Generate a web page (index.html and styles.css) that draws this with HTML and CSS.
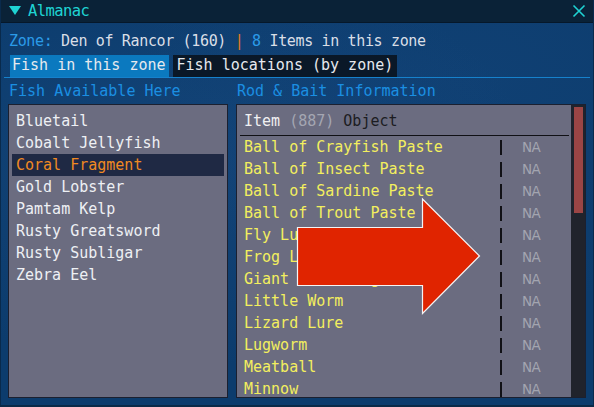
FILE: index.html
```html
<!DOCTYPE html>
<html>
<head>
<meta charset="utf-8">
<link rel="stylesheet" href="styles.css">
</head>
<body>
<div class="window">
  <div class="titlebar">
    <svg class="tri" width="14" height="12" viewBox="0 0 14 12"><polygon points="1,1 13,1 7,10" fill="#1fd3d3"/></svg>
    <span class="title">Almanac</span>
    <svg class="close" width="14" height="14" viewBox="0 0 14 14"><path d="M1.5 1.5 L12.5 12.5 M12.5 1.5 L1.5 12.5" stroke="#1fd3d3" stroke-width="1.6"/></svg>
  </div>
  <div class="content">
    <div class="zone"><span class="blue">Zone:</span> Den of Rancor (160) <span class="orange">|</span> <span class="blue">8</span> Items in this zone</div>
    <div class="tabs">
      <div class="tab active">Fish in this zone</div>
      <div class="tab">Fish locations (by zone)</div>
    </div>
    <div class="columns">
      <div class="col left">
        <div class="head">Fish Available Here</div>
        <div class="panel fishlist">
          <div class="fish">Bluetail</div>
          <div class="fish">Cobalt Jellyfish</div>
          <div class="fish selected">Coral Fragment</div>
          <div class="fish">Gold Lobster</div>
          <div class="fish">Pamtam Kelp</div>
          <div class="fish">Rusty Greatsword</div>
          <div class="fish">Rusty Subligar</div>
          <div class="fish">Zebra Eel</div>
        </div>
      </div>
      <div class="col right">
        <div class="head">Rod &amp; Bait Information</div>
        <div class="panel baitpanel">
          <div class="baitlist">
            <div class="thead"><span class="light">Item</span> <span class="gray">(887)</span> <span class="dark">Object</span></div>
            <div class="row"><span class="name">Ball of Crayfish Paste</span><span class="sep"></span><span class="na">NA</span></div>
            <div class="row"><span class="name">Ball of Insect Paste</span><span class="sep"></span><span class="na">NA</span></div>
            <div class="row"><span class="name">Ball of Sardine Paste</span><span class="sep"></span><span class="na">NA</span></div>
            <div class="row"><span class="name">Ball of Trout Paste</span><span class="sep"></span><span class="na">NA</span></div>
            <div class="row"><span class="name">Fly Lure</span><span class="sep"></span><span class="na">NA</span></div>
            <div class="row"><span class="name">Frog Lure</span><span class="sep"></span><span class="na">NA</span></div>
            <div class="row"><span class="name">Giant Shell Bug</span><span class="sep"></span><span class="na">NA</span></div>
            <div class="row"><span class="name">Little Worm</span><span class="sep"></span><span class="na">NA</span></div>
            <div class="row"><span class="name">Lizard Lure</span><span class="sep"></span><span class="na">NA</span></div>
            <div class="row"><span class="name">Lugworm</span><span class="sep"></span><span class="na">NA</span></div>
            <div class="row"><span class="name">Meatball</span><span class="sep"></span><span class="na">NA</span></div>
            <div class="row"><span class="name">Minnow</span><span class="sep"></span><span class="na">NA</span></div>
          </div>
          <div class="scrollbar"><div class="thumb"></div></div>
        </div>
      </div>
    </div>
  </div>
  <svg class="arrow" width="594" height="407" viewBox="0 0 594 407">
    <polygon points="297.5,227.5 422.5,227.5 422.5,199 479.5,256 422.5,313.5 422.5,285.5 297.5,285.5" fill="#e02400" stroke="#f4f4f4" stroke-width="1.2"/>
  </svg>
</div>
</body>
</html>
```
FILE: styles.css
```css
* { box-sizing: border-box; }
html, body { margin: 0; padding: 0; }
body {
  width: 594px;
  height: 407px;
  overflow: hidden;
  font-family: "DejaVu Sans Mono", "Liberation Mono", monospace;
  font-size: 15px;
  background: #0c3c6d;
}
.window {
  position: relative;
  width: 594px;
  height: 407px;
  display: flex;
  flex-direction: column;
  background:
    radial-gradient(ellipse at 30% 40%, rgba(40,90,150,0.25), rgba(0,0,0,0) 60%),
    radial-gradient(ellipse at 80% 20%, rgba(30,80,140,0.2), rgba(0,0,0,0) 50%),
    #0c3c6d;
  border-left: 1px solid #092a4c;
  border-right: 1px solid #092a4c;
  border-bottom: 2px solid #0a2a48;
}
.titlebar {
  height: 23px;
  flex: none;
  display: flex;
  align-items: center;
  background: #0a2237;
  border-bottom: 1px solid #06182a;
  padding: 0 7px 0 7px;
}
.tri { display: block; margin-right: 6px; margin-top: 0px; }
.title {
  color: #1fd3d3;
  font-size: 15.5px;
  letter-spacing: -0.6px;
  line-height: 18px;
  flex: 1;
}
.close { display: block; margin-right: 0px; }
.content {
  flex: 1;
  display: flex;
  flex-direction: column;
  min-height: 0;
}
.zone {
  height: 32px;
  padding: 9px 0 0 8px;
  font-size: 15px;
  letter-spacing: -0.35px;
  line-height: 18px;
  color: #d9dee6;
}
.blue { color: #2b9be8; }
.orange { color: #e37b1e; }
.tabs {
  height: 23px;
  display: flex;
  gap: 4px;
  margin: 0 3px;
  padding-left: 6px;
  border-bottom: 1px solid #1681cc;
}
.tab {
  height: 22px;
  line-height: 21px;
  padding: 0 4px;
  color: #e6e9ee;
  background: #0a1828;
}
.tab.active { background: #0b79bf; padding: 0 3px 0 2px; }
.columns {
  flex: 1;
  display: flex;
  gap: 8px;
  padding: 0 7px 7px 7px;
  min-height: 0;
}
.col { display: flex; flex-direction: column; min-height: 0; }
.col.left { width: 220px; }
.col.right { width: 350px; }
.head {
  height: 26px;
  padding: 4px 0 0 1px;
  line-height: 18px;
  color: #1b8fe2;
}
.panel {
  flex: 1;
  background: #6b6c80;
  border: 1px solid #1b2030;
  min-height: 0;
  overflow: hidden;
}
.fishlist { padding: 5px 3px 0 3px; }
.fish {
  height: 22px;
  line-height: 22px;
  padding-left: 4px;
  color: #eef0f4;
}
.fish.selected { background: #1f2944; color: #f08a22; }
.baitpanel { display: flex; }
.baitlist { flex: 1; padding-top: 5px; overflow: hidden; }
.thead {
  height: 26px;
  margin: 0 2px 0 3px;
  padding-left: 4px;
  line-height: 22px;
  border-bottom: 1px solid #101015;
}
.light { color: #f0f0f2; }
.gray { color: #a4a6b2; }
.dark { color: #1c1c22; }
.row {
  height: 22px;
  display: flex;
  align-items: center;
  padding-left: 7px;
  color: #f3ef5e;
}
.name { width: 256px; line-height: 22px; white-space: nowrap; }
.sep {
  width: 2px;
  height: 15px;
  background: #111116;
  margin-right: 20px;
}
.na {
  color: #a3a5b0;
  font-family: "DejaVu Sans", "Liberation Sans", sans-serif;
  font-size: 13.5px;
  letter-spacing: -0.5px;
}
.scrollbar {
  width: 14px;
  background: #20232c;
  padding: 2px 2px 0 3px;
}
.thumb {
  height: 106px;
  background: #9b4545;
}
.arrow { position: absolute; left: -1px; top: 0; pointer-events: none; }
```
